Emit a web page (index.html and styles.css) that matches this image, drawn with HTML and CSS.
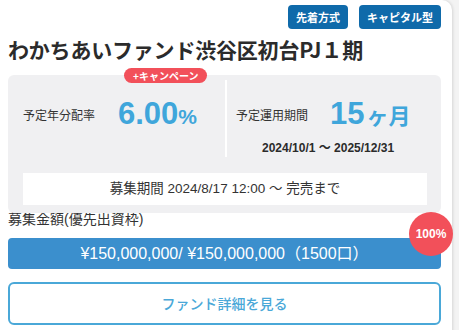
FILE: index.html
```html
<!DOCTYPE html>
<html lang="ja">
<head>
<meta charset="utf-8">
<link rel="stylesheet" href="styles.css">
</head>
<body>
<div class="card">
  <div class="tags">
    <span class="tag">先着方式</span>
    <span class="tag">キャピタル型</span>
  </div>
  <h1 class="title">わかちあいファンド渋谷区初台PJ１期</h1>
  <div class="summary">
    <span class="campaign">+キャンペーン</span>
    <div class="cols">
      <div class="col col-left">
        <div class="row">
          <span class="label">予定年分配率</span>
          <span class="value">6.00<small>%</small></span>
        </div>
      </div>
      <div class="col col-right">
        <div class="row">
          <span class="label">予定運用期間</span>
          <span class="value">15<small class="jp">ヶ月</small></span>
        </div>
        <div class="dates">2024/10/1 ～ 2025/12/31</div>
      </div>
    </div>
    <div class="period">募集期間 2024/8/17 12:00 ～ 完売まで</div>
  </div>
  <div class="amount-label">募集金額(優先出資枠)</div>
  <div class="progress">
    <div class="bar">¥150,000,000/ ¥150,000,000（1500口）</div>
    <span class="pct">100%</span>
  </div>
  <a class="detail-btn" href="#">ファンド詳細を見る</a>
</div>
</body>
</html>
```
FILE: styles.css
```css
html, body {
  margin: 0;
  padding: 0;
}
body {
  background: #f3f3f3;
  font-family: "Liberation Sans", "Noto Sans CJK JP", sans-serif;
  color: #333;
  width: 459px;
  height: 330px;
  overflow: hidden;
}
.card {
  width: 452px;
  height: 340px;
  box-sizing: border-box;
  background: #fff;
  border-radius: 0 10px 0 0;
  box-shadow: 1px 0 3px rgba(0, 0, 0, 0.12);
  padding: 5px 11px 0 8px;
}
.tags {
  display: flex;
  justify-content: flex-end;
  gap: 11px;
}
.tag {
  background: #0f6aaa;
  color: #fff;
  font-family: "Noto Sans CJK JP", sans-serif;
  font-size: 11px;
  font-weight: 700;
  height: 24px;
  line-height: 24px;
  padding: 0 8px;
  border-radius: 4px;
}
.title {
  margin: 5px 0 0;
  font-family: "Noto Sans CJK JP", sans-serif;
  font-size: 21px;
  font-weight: 700;
  line-height: 30px;
  color: #2b2b2b;
  letter-spacing: -0.2px;
}
.summary {
  position: relative;
  margin-top: 11px;
  background: #f0f0f2;
  border-radius: 6px;
  padding: 5px 14px 8px 15px;
}
.campaign {
  position: absolute;
  left: 116px;
  top: -7px;
  background: #f2505a;
  color: #fff;
  font-family: "Noto Sans CJK JP", sans-serif;
  font-size: 10px;
  font-weight: 700;
  height: 15px;
  line-height: 15px;
  padding: 0 9px;
  border-radius: 8px;
}
.cols {
  display: flex;
  height: 77px;
}
.col-left {
  width: 202px;
  border-right: 2px solid #fff;
}
.col-right {
  flex: 1;
  padding-left: 9px;
}
.row {
  display: flex;
  align-items: center;
  height: 64px;
  padding-top: 4px;
  box-sizing: border-box;
}
.label {
  font-family: "Noto Sans CJK JP", sans-serif;
  font-size: 12px;
  color: #333;
}
.col-left .label {
  margin-right: 23px;
}
.col-right .label {
  margin-right: 22px;
}
.value {
  font-family: "Liberation Sans", sans-serif;
  font-weight: 700;
  font-size: 31px;
  color: #3fa6db;
}
.value small {
  font-size: 21px;
}
.value small.jp {
  font-family: "Noto Sans CJK JP", sans-serif;
  font-size: 22px;
  margin-left: 2px;
}
.dates {
  margin-top: -6px;
  padding-left: 26px;
  font-family: "Liberation Sans", "Noto Sans CJK JP", sans-serif;
  font-size: 12px;
  font-weight: 700;
  color: #2b2b2b;
}
.period {
  margin-top: 16px;
  background: #fff;
  height: 32px;
  line-height: 32px;
  text-align: center;
  font-size: 13.5px;
  color: #333;
}
.amount-label {
  font-size: 14px;
  line-height: 14px;
  margin-top: -1px;
  color: #333;
}
.progress {
  position: relative;
  margin-top: 12px;
}
.bar {
  background: #3b8fcd;
  color: #fff;
  height: 31px;
  line-height: 31px;
  border-radius: 4px;
  text-align: center;
  font-size: 16px;
}
.pct {
  position: absolute;
  right: -12px;
  top: -26px;
  width: 44px;
  height: 44px;
  border-radius: 50%;
  background: #f2505a;
  color: #fff;
  font-size: 12px;
  font-weight: 700;
  line-height: 44px;
  text-align: center;
}
.detail-btn {
  display: block;
  margin-top: 13px;
  height: 43px;
  box-sizing: border-box;
  border: 2px solid #4aa8d8;
  border-radius: 6px;
  text-align: center;
  line-height: 39px;
  color: #4aa8d8;
  font-family: "Noto Sans CJK JP", sans-serif;
  font-size: 14px;
  font-weight: 500;
  text-decoration: none;
}
```
